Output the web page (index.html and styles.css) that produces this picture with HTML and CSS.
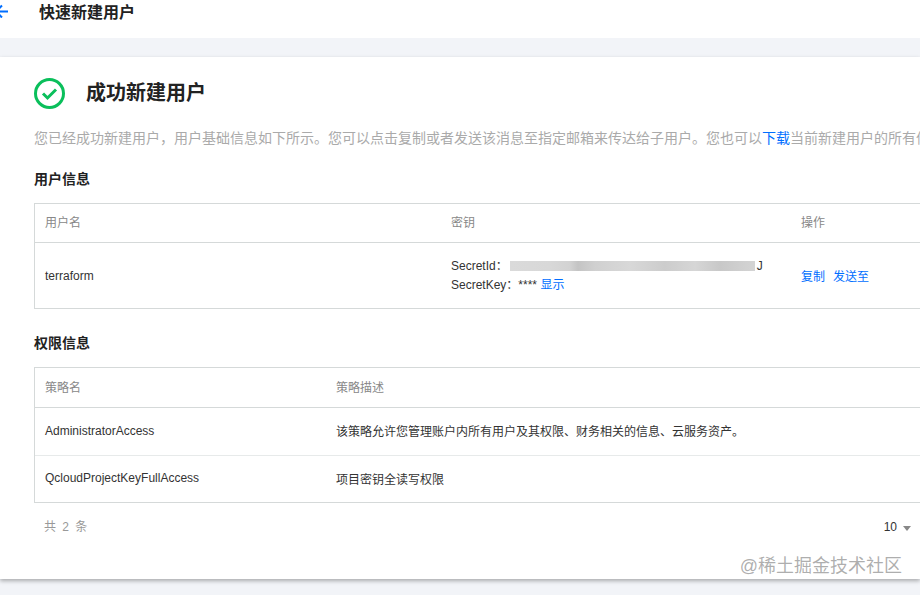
FILE: index.html
```html
<!DOCTYPE html>
<html lang="zh-CN">
<head>
    <meta charset="UTF-8">
    <title>快速新建用户</title>
    <link rel="stylesheet" href="styles.css">
</head>
<body>
    <!-- 顶部标题 -->
    <div class="top-bar">
        <svg class="back-icon" width="10" height="14" viewBox="0 0 10 14">
            <path d="M-4 7.500L2 1.500M-4 7.500L2 13.500M-3 7.500H8" stroke="#006eff" stroke-width="2" fill="none"/>
        </svg>
        <h1>快速新建用户</h1>
    </div>

    <div class="card">
        <div class="success-head">
            <svg width="31" height="31" viewBox="0 0 31 31">
                <circle cx="15.500" cy="15.500" r="14" stroke="#0abf5b" stroke-width="3" fill="none"/>
                <path d="M9 15.500L13.500 20L22 11.500" stroke="#0abf5b" stroke-width="3" fill="none"/>
            </svg>
            <h2>成功新建用户</h2>
        </div>
        <p class="intro">您已经成功新建用户，用户基础信息如下所示。您可以点击复制或者发送该消息至指定邮箱来传达给子用户。您也可以<a>下载</a>当前新建用户的所有信息。</p>

        <h3>用户信息</h3>
        <div class="table user-table">
            <div class="row head">
                <div>用户名</div>
                <div>密钥</div>
                <div>操作</div>
            </div>
            <div class="row body-row user-row">
                <div>terraform</div>
                <div class="keys">
                    <div class="key-line">SecretId：<span class="mask"></span><span class="key-end">J</span></div>
                    <div>SecretKey：**** <a>显示</a></div>
                </div>
                <div class="actions"><a>复制</a><a>发送至</a></div>
            </div>
        </div>

        <h3 class="second">权限信息</h3>
        <div class="table policy-table">
            <div class="row head">
                <div>策略名</div>
                <div>策略描述</div>
            </div>
            <div class="row body-row">
                <div>AdministratorAccess</div>
                <div>该策略允许您管理账户内所有用户及其权限、财务相关的信息、云服务资产。</div>
            </div>
            <div class="row body-row last">
                <div>QcloudProjectKeyFullAccess</div>
                <div>项目密钥全读写权限</div>
            </div>
        </div>

        <div class="pager">
            <span class="total">共 2 条</span>
            <span class="page-size">10<i class="caret"></i></span>
        </div>
    </div>

    <div class="watermark">@稀土掘金技术社区</div>
</body>
</html>
```

FILE: styles.css
```css
body {
    margin: 0;
    width: 920px;
    height: 595px;
    overflow: hidden;
    position: relative;
    background-color: #f2f4f8;
    font-family: "Liberation Sans", "Noto Sans CJK SC", sans-serif;
    font-size: 12px;
    color: #333;
}

a {
    color: #006eff;
}

/* 顶部标题 */
.top-bar {
    display: flex;
    align-items: center;
    height: 38px;
    padding-bottom: 16px;
    box-sizing: border-box;
    background: #fff;
}

.back-icon {
    flex: none;
}

.top-bar h1 {
    margin: 0 0 0 29px;
    font-size: 16px;
    font-weight: 700;
    color: #222;
}

/* 白色卡片 */
.card {
    margin-top: 19px;
    height: 522px;
    box-sizing: border-box;
    padding: 21px 0 0 34px;
    background: #fff;
    box-shadow: 0 2px 4px rgba(0, 0, 0, 0.3);
    overflow: hidden;
}

.success-head {
    display: flex;
    align-items: center;
    height: 31px;
}

.success-head h2 {
    margin: 0 0 5px 21px;
    font-size: 20px;
    font-weight: 700;
    color: #222;
}

.intro {
    margin: 19px 0 0;
    width: 1100px;
    line-height: 20px;
    font-size: 14px;
    color: #aaa;
    white-space: nowrap;
}

.intro a {
    color: #006eff;
}

h3 {
    margin: 21px 0 0;
    line-height: 20px;
    font-size: 14px;
    font-weight: 700;
    color: #222;
}

h3.second {
    margin-top: 24px;
}

/* 表格 */
.table {
    margin-top: 14px;
    width: 1000px;
    border: 1px solid #d5d9d9;
    box-sizing: border-box;
}

.row {
    display: grid;
    align-items: center;
    padding-left: 10px;
}

.user-table .row {
    grid-template-columns: 406px 350px 1fr;
}

.policy-table .row {
    grid-template-columns: 291px 1fr;
}

.head {
    height: 39px;
    color: #888;
    border-bottom: 1px solid #d5d9d9;
}

.head div {
    margin-bottom: 2px;
}

.user-table .head {
    height: 38px;
}

.user-table .head div {
    margin-bottom: 3px;
}

.body-row {
    height: 47px;
    border-bottom: 1px solid #e7eaea;
}

.policy-table .body-row div {
    margin-bottom: 2px;
}

.body-row.last {
    height: 46px;
    border-bottom: none;
}

.user-row {
    height: 65px;
    border-bottom: none;
}

.keys {
    line-height: 19px;
}

.key-line {
    display: flex;
    align-items: center;
}

.mask {
    width: 245px;
    height: 10px;
    margin-left: 2px;
    background: linear-gradient(90deg, #dadada 0, #d8d8d8 40px, #d2d2d2 60px, #c4c4c4 68px, #d0d0d0 85px, #d8d8d8 120px, #cccccc 155px, #d6d6d6 185px, #c8c8c8 210px, #d4d4d4 245px);
}

.key-end {
    margin-left: 2px;
}

.actions a {
    margin-right: 8px;
}

/* 分页 */
.pager {
    display: flex;
    justify-content: space-between;
    align-items: center;
    width: 877px;
    margin-top: 14px;
    line-height: 20px;
}

.total {
    margin-left: 10px;
    color: #999;
    word-spacing: 3px;
}

.page-size {
    display: flex;
    align-items: center;
    color: #333;
}

.caret {
    width: 0;
    height: 0;
    margin-left: 6px;
    margin-top: 2px;
    border: 4px solid transparent;
    border-top: 5px solid #888;
    border-bottom: none;
}

/* 水印 */
.watermark {
    position: absolute;
    right: 18px;
    top: 554px;
    font-size: 18px;
    line-height: 24px;
    color: rgba(120, 120, 120, 0.6);
}
```
